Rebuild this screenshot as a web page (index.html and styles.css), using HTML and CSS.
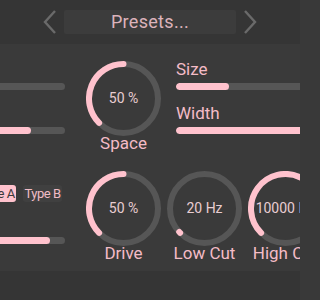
FILE: index.html
```html
<!DOCTYPE html>
<html>
<head>
<meta charset="utf-8">
<link rel="stylesheet" href="styles.css">
</head>
<body>
<div class="app">
  <header class="header">
    <svg class="chev" width="14" height="24" viewBox="0 0 14 24"><path d="M12 1 L2 12 L12 23" fill="none" stroke="#6a6a6a" stroke-width="2.4"/></svg>
    <div class="presets">Presets...</div>
    <svg class="chev" width="14" height="24" viewBox="0 0 14 24"><path d="M2 1 L12 12 L2 23" fill="none" stroke="#6a6a6a" stroke-width="2.4"/></svg>
  </header>
  <main class="main">
    <div class="row row1">
      <div class="leftcol">
        <div class="lbl"></div>
        <div class="bar"><div class="fill" style="width:0%"></div></div>
        <div class="lbl lbl2"></div>
        <div class="bar"><div class="fill" style="width:70%"></div></div>
      </div>
      <div class="knob k1">
        <div class="dial">
          <svg width="75" height="75" viewBox="0 0 75 75">
            <circle class="track" cx="37.5" cy="37.5" r="34.5"/>
            <path class="val" d="M13.105 61.895 A34.5 34.5 0 0 1 37.5 3"/>
          </svg>
          <span class="value">50 %</span>
        </div>
        <div class="name">Space</div>
      </div>
      <div class="rightcol">
        <div class="lbl">Size</div>
        <div class="bar"><div class="fill" style="width:31%"></div></div>
        <div class="lbl lbl2">Width</div>
        <div class="bar"><div class="fill" style="width:100%"></div></div>
      </div>
    </div>
    <div class="row row2">
      <div class="leftcol">
        <div class="types">
          <div class="type on">Type A</div>
          <div class="type">Type B</div>
        </div>
        <div class="bar bar3"><div class="fill" style="width:87%"></div></div>
      </div>
      <div class="knob k1">
        <div class="dial">
          <svg width="75" height="75" viewBox="0 0 75 75">
            <circle class="track" cx="37.5" cy="37.5" r="34.5"/>
            <path class="val" d="M13.105 61.895 A34.5 34.5 0 0 1 37.5 3"/>
          </svg>
          <span class="value">50 %</span>
        </div>
        <div class="name">Drive</div>
      </div>
      <div class="knob">
        <div class="dial">
          <svg width="75" height="75" viewBox="0 0 75 75">
            <circle class="track" cx="37.5" cy="37.5" r="34.5"/>
            <path class="val" d="M13.105 61.895 A34.5 34.5 0 0 1 12.2 60.9"/>
          </svg>
          <span class="value">20 Hz</span>
        </div>
        <div class="name">Low Cut</div>
      </div>
      <div class="knob">
        <div class="dial">
          <svg width="75" height="75" viewBox="0 0 75 75">
            <circle class="track" cx="37.5" cy="37.5" r="34.5"/>
            <path class="val" d="M13.105 61.895 A34.5 34.5 0 1 1 70.31 48.16"/>
          </svg>
          <span class="value">10000 Hz</span>
        </div>
        <div class="name">High Cut</div>
      </div>
    </div>
  </main>
  <footer class="footer"></footer>
</div>
</body>
</html>
```

FILE: styles.css
```css
html, body {
  margin: 0;
  padding: 0;
  width: 300px;
  height: 300px;
  overflow: hidden;
  background: #393939;
}
.app {
  width: 460px;
  margin-left: -80px;
  font-family: Roboto, "Liberation Sans", sans-serif;
  color: #f4bcc7;
}
.header {
  height: 44px;
  background: #353535;
  display: flex;
  align-items: center;
  justify-content: center;
  gap: 7px;
}
.chev { display: block; }
.presets {
  width: 172px;
  height: 24px;
  margin-top: -1px;
  background: #3c3c3c;
  border-radius: 2px;
  color: #dcb3bb;
  font-size: 18px;
  line-height: 24px;
  letter-spacing: 0.3px;
  text-align: center;
}
.main {
  height: 227px;
  background: #3a3a3a;
  padding-top: 17px;
  box-sizing: border-box;
}
.row {
  display: flex;
  align-items: flex-start;
  padding-left: 30px;
}
.row2 { margin-top: 19px; }
.leftcol {
  width: 115px;
  display: flex;
  flex-direction: column;
}
.rightcol {
  width: 170px;
  margin-left: 15px;
  display: flex;
  flex-direction: column;
}
.lbl {
  height: 16px;
  line-height: 16px;
  font-size: 17px;
  margin-bottom: 6px;
}
.lbl2 { margin-top: 15px; }
.bar {
  height: 7px;
  border-radius: 3.5px;
  background: #565656;
  overflow: hidden;
}
.fill {
  height: 100%;
  border-radius: 3.5px;
  background: #ffc2cd;
}
.types {
  display: flex;
  justify-content: flex-end;
  gap: 7px;
  padding-right: 3px;
  margin-top: 14px;
}
.type {
  width: 39px;
  height: 17px;
  line-height: 17px;
  border-radius: 3px;
  background: #404040;
  font-size: 13px;
  letter-spacing: -0.5px;
  text-align: center;
  color: #f0bcc6;
  white-space: nowrap;
}
.type.on {
  background: #ffc2cd;
  color: #3a3a3a;
}
.bar3 { margin-top: 35px; }
.knob {
  width: 75px;
  margin-left: 6px;
  display: flex;
  flex-direction: column;
  align-items: center;
}
.knob.k1 { margin-left: 21px; }
.dial {
  position: relative;
  width: 75px;
  height: 75px;
}
.dial svg { display: block; }
.track {
  fill: none;
  stroke: #565656;
  stroke-width: 6;
}
.val {
  fill: none;
  stroke: #ffc2cd;
  stroke-width: 6;
  stroke-linecap: round;
}
.value {
  position: absolute;
  left: 0;
  top: 0;
  width: 75px;
  height: 75px;
  line-height: 75px;
  text-align: center;
  font-size: 14px;
  color: #e8cdd2;
  white-space: nowrap;
}
.name {
  margin-top: -2px;
  height: 18px;
  line-height: 18px;
  font-size: 17px;
  white-space: nowrap;
}
.footer {
  height: 29px;
  background: #353535;
}
```
